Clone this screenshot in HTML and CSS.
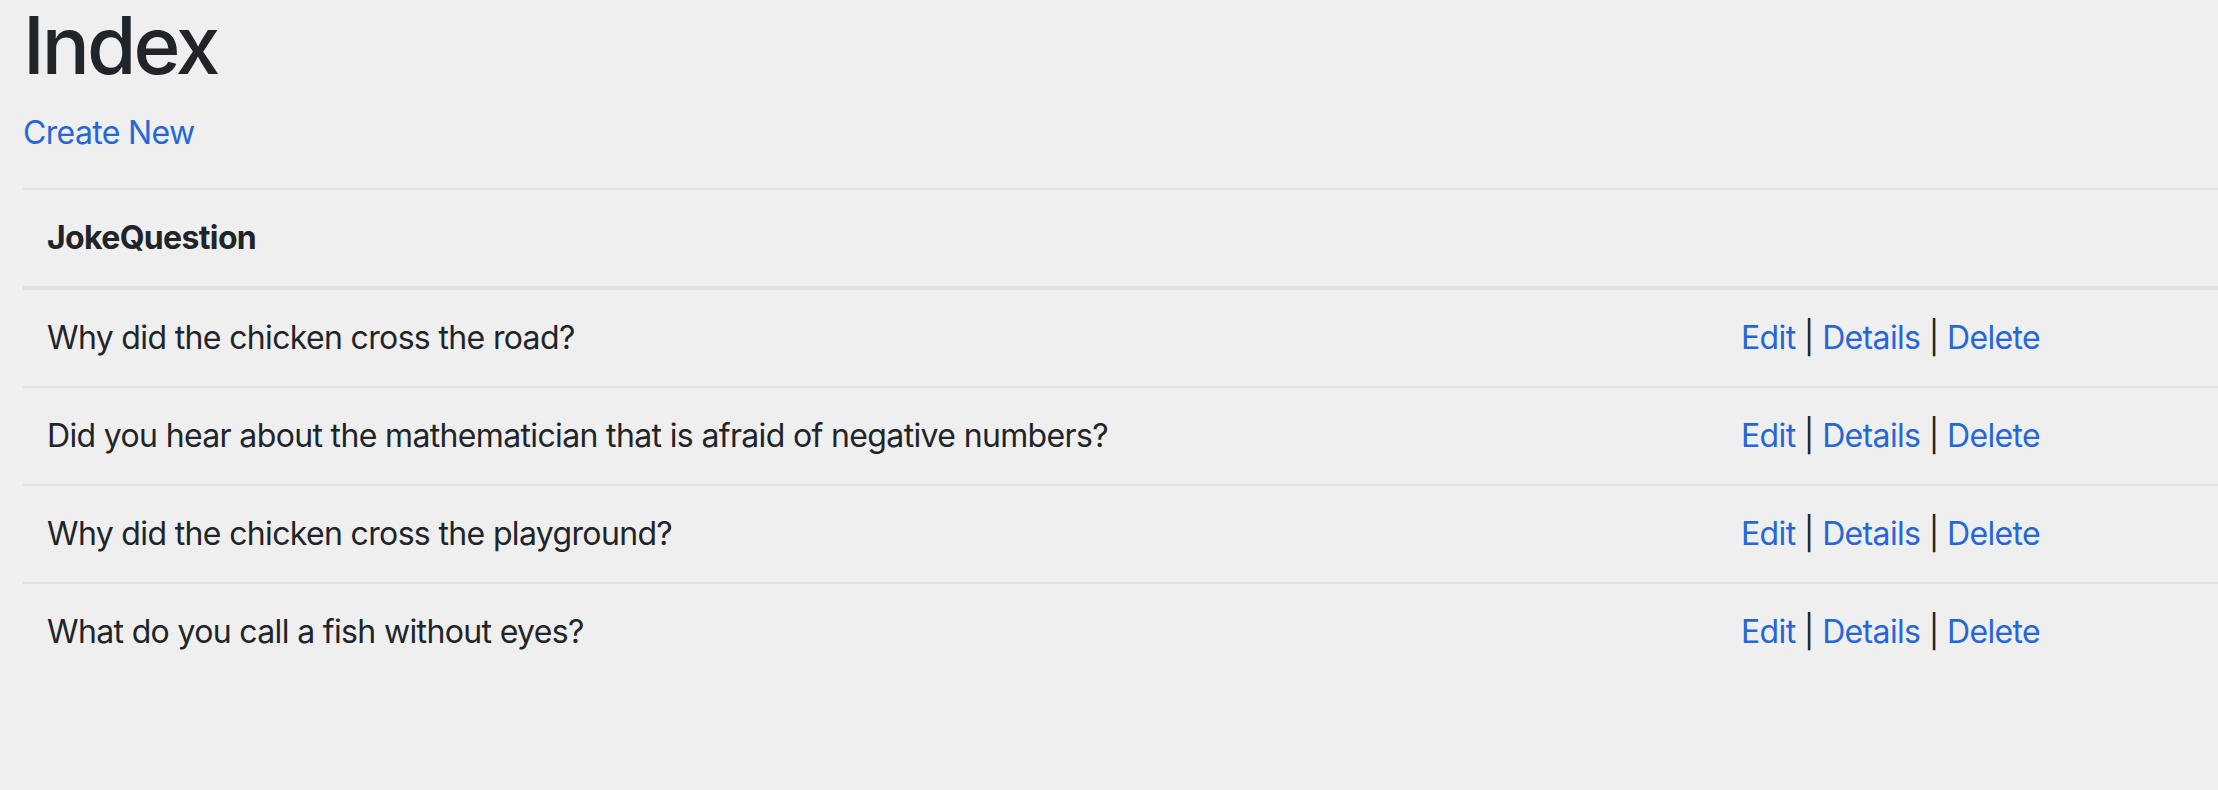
FILE: index.html
```html
<!DOCTYPE html>
<html lang="en">
<head>
<meta charset="utf-8">
<title>Index</title>
<link rel="stylesheet" href="styles.css">
</head>
<body>
<main class="page">
  <h1 class="title">Index</h1>
  <p class="actions-top"><a href="#">Create New</a></p>
  <table class="table">
    <thead>
      <tr>
        <th class="col-question">JokeQuestion</th>
        <th class="col-actions"></th>
      </tr>
    </thead>
    <tbody>
      <tr>
        <td>Why did the chicken cross the road?</td>
        <td><a href="#">Edit</a> | <a href="#">Details</a> | <a href="#">Delete</a></td>
      </tr>
      <tr>
        <td>Did you hear about the mathematician that is afraid of negative numbers?</td>
        <td><a href="#">Edit</a> | <a href="#">Details</a> | <a href="#">Delete</a></td>
      </tr>
      <tr>
        <td>Why did the chicken cross the playground?</td>
        <td><a href="#">Edit</a> | <a href="#">Details</a> | <a href="#">Delete</a></td>
      </tr>
      <tr>
        <td>What do you call a fish without eyes?</td>
        <td><a href="#">Edit</a> | <a href="#">Details</a> | <a href="#">Delete</a></td>
      </tr>
    </tbody>
  </table>
</main>
</body>
</html>
```
FILE: styles.css
```css
html, body {
  margin: 0;
  padding: 0;
  background: #efefef;
  overflow: hidden;
}
body {
  font-family: Inter, "Noto Sans", "Liberation Sans", sans-serif;
  font-size: 32px;
  line-height: 48px;
  color: #212529;
  letter-spacing: -0.65px;
}
.page {
  padding-left: 23px;
}
.title {
  font-size: 80px;
  font-weight: 500;
  line-height: 96px;
  margin: -3px 0 16px;
  letter-spacing: -3px;
}
.actions-top {
  margin: 0 0 31px;
}
a {
  color: #2767d5;
  text-decoration: none;
}
.table {
  width: 2195px;
  border-collapse: collapse;
}
.table th,
.table td {
  padding: 24px;
  border-top: 2px solid #dee2e6;
  text-align: left;
  vertical-align: top;
}
.table thead th {
  vertical-align: bottom;
  border-bottom: 4px solid #dee2e6;
  font-weight: 700;
}
.col-question {
  width: 1646px;
}
.table tbody tr:first-child td {
  border-top: 0;
}
```
